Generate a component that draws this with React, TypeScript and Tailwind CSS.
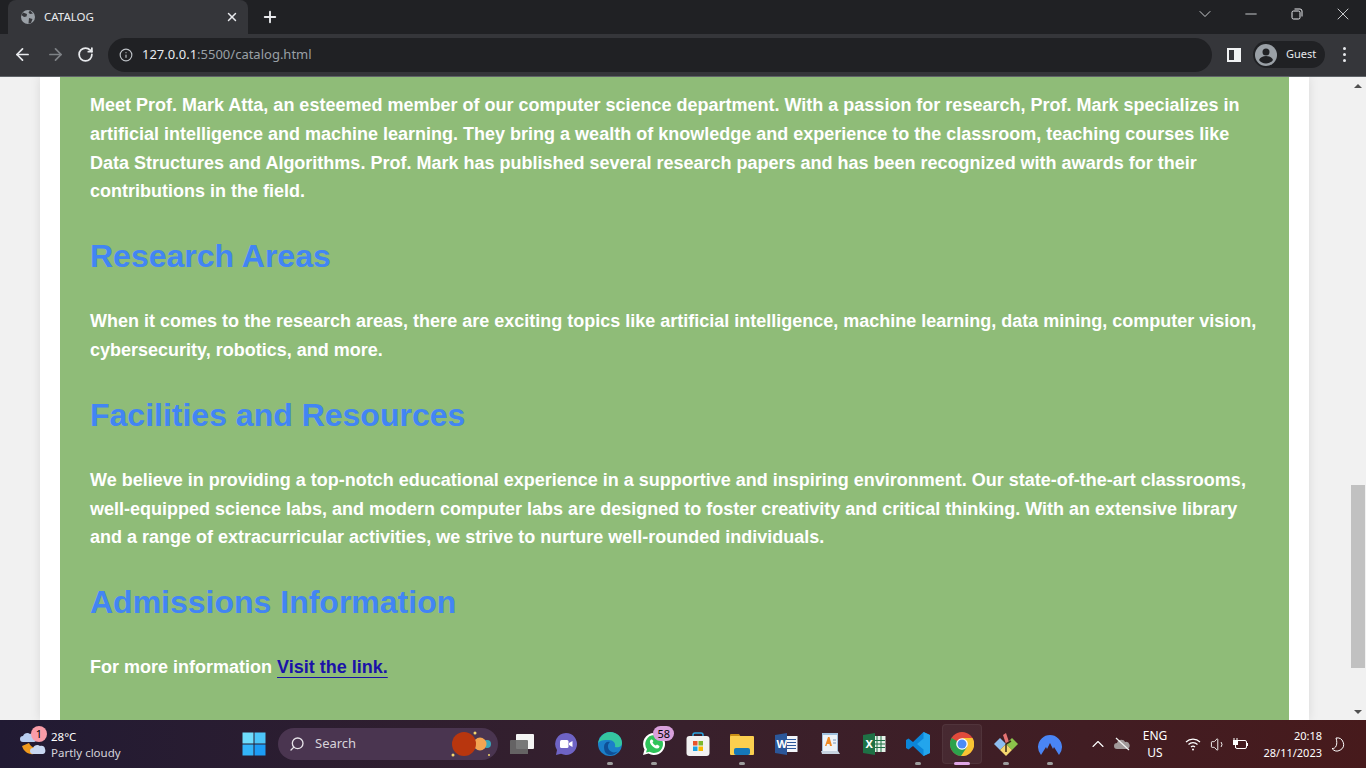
import React from "react";
import { ArrowLeft, ArrowRight, RotateCw, Info, X, Plus, ChevronDown, ChevronUp, Minus, Search, Volume1 } from "lucide-react";

const uiFont = "font-['Noto_Sans',sans-serif]";

const TabStrip = () => (
  <div className={`flex h-[34px] bg-[#202124] text-[#e8eaed] ${uiFont}`}>
    <div className="ml-2 flex w-[240px] items-center rounded-t-lg bg-[#35363a] pl-3 pr-2">
      <svg width="16" height="16" viewBox="0 0 16 16" className="shrink-0">
        <circle cx="8" cy="8" r="7" fill="#9aa0a6" />
        <path d="M3 3.500 7 5l-.5 2.500L4 8 1.500 6ZM9 9l3.500 1-1.500 4-2.500.5ZM10 1.500l3 3-3 .5-1.500-1.500Z" fill="#35363a" />
      </svg>
      <span className="ml-2 flex-1 text-[11.500px] leading-none">CATALOG</span>
      <X size={14} strokeWidth={2.5} className="mr-[1px]" />
    </div>
    <div className="ml-[13px] flex items-center">
      <Plus size={18} strokeWidth={2.5} />
    </div>
    <div className="ml-auto flex h-[28px] items-center">
      <div className="flex w-[46px] justify-center"><ChevronDown size={20} strokeWidth={1} /></div>
      <div className="flex w-[46px] justify-center"><Minus size={18} strokeWidth={1.1} /></div>
      <div className="flex w-[46px] justify-center">
        <svg width="12" height="12" viewBox="0 0 12 12" fill="none" stroke="#e8eaed">
          <rect x="1" y="3" width="8" height="8" rx="1.500" />
          <path d="M3.500 1h5.500a2 2 0 0 1 2 2v5.500" />
        </svg>
      </div>
      <div className="flex w-[46px] justify-center"><X size={20} strokeWidth={1} /></div>
    </div>
  </div>
);

const Toolbar = () => (
  <div className={`flex h-[43px] items-center border-b border-[#5f6368] bg-[#35363a] pb-[1px] pr-[20px] ${uiFont}`}>
    <ArrowLeft size={19} strokeWidth={2.2} color="#e8eaed" className="ml-[13px]" />
    <ArrowRight size={19} strokeWidth={2.2} color="#7e8286" className="ml-[14px]" />
    <RotateCw size={17} strokeWidth={2.5} color="#e8eaed" className="ml-[12px]" />
    <div className="ml-[14px] flex h-[34px] flex-1 items-center rounded-full bg-[#202124] pl-[11px]">
      <Info size={14} color="#bdc1c6" />
      <span className="ml-[9px] text-[13px] text-[#9aa0a6]">
        <span className="text-[#e8eaed]">127.0.0.1</span>:5500/catalog.html
      </span>
    </div>
    <div className="ml-[15px] flex h-[14px] w-[14px] items-center border-[2px] border-r-[7px] border-[#f1f3f4]" />
    <div className="ml-[12px] flex h-[27px] w-[72px] items-center rounded-full bg-[#202124] pl-[2px]">
      <svg width="22" height="22" viewBox="0 0 22 22">
        <circle cx="11" cy="11" r="11" fill="#9aa0a6" />
        <circle cx="11" cy="8" r="3.500" fill="#202124" />
        <path d="M4 16c1.500-3 4-4 7-4s5.500 1 7 4c-1.500 2-4 3.500-7 3.500S5.500 18 4 16Z" fill="#202124" />
      </svg>
      <span className="ml-[9px] text-[11px] text-[#e8eaed]">Guest</span>
    </div>
    <div className="ml-[18px] flex flex-col gap-[3px]">
      <span className="h-[3px] w-[3px] rounded-full bg-[#e8eaed]" />
      <span className="h-[3px] w-[3px] rounded-full bg-[#e8eaed]" />
      <span className="h-[3px] w-[3px] rounded-full bg-[#e8eaed]" />
    </div>
  </div>
);

const Heading = ({ children }: { children: React.ReactNode }) => (
  <h2 className="mt-[24.900px] text-[32px] font-bold leading-[51.200px] text-[#4285f4]">{children}</h2>
);

const Para = ({ children }: { children: React.ReactNode }) => (
  <p className="mt-[24.900px] text-[18px] font-bold leading-[28.800px] text-white">{children}</p>
);

const Page = () => (
  <div className="flex min-h-0 flex-1 overflow-hidden bg-[#f1f1f1] font-['Liberation_Sans',Arial,sans-serif]">
    <div className="flex-1 overflow-hidden pl-[40px] pr-[41px]">
      <div className="h-full bg-white px-5 shadow-[0_0_10px_rgba(0,0,0,0.1)]">
        <div className="h-full overflow-hidden bg-[#8fbc78] px-[30px] pt-[14px]">
          <p className="text-[18px] font-bold leading-[28.800px] text-white">
            Meet Prof. Mark Atta, an esteemed member of our computer science department. With a passion for research, Prof. Mark specializes in artificial intelligence and machine learning. They bring a wealth of knowledge and experience to the classroom, teaching courses like Data Structures and Algorithms. Prof. Mark has published several research papers and has been recognized with awards for their contributions in the field.
          </p>
          <Heading>Research Areas</Heading>
          <Para>
            When it comes to the research areas, there are exciting topics like artificial intelligence, machine learning, data mining, computer vision, cybersecurity, robotics, and more.
          </Para>
          <Heading>Facilities and Resources</Heading>
          <Para>
            We believe in providing a top-notch educational experience in a supportive and inspiring environment. Our state-of-the-art classrooms, well-equipped science labs, and modern computer labs are designed to foster creativity and critical thinking. With an extensive library and a range of extracurricular activities, we strive to nurture well-rounded individuals.
          </Para>
          <Heading>Admissions Information</Heading>
          <Para>
            For more information{" "}
            <a href="#" className="text-[#1a12a8] underline decoration-1 underline-offset-[4px]">Visit the link.</a>
          </Para>
        </div>
      </div>
    </div>
    <div className="flex w-4 flex-col items-center bg-[#f1f1f1]">
      <div className="mt-[7px] h-0 w-0 border-x-[4px] border-b-[4px] border-x-transparent border-b-[#505050]" />
      <div className="mt-[397px] h-[183px] w-[14px] bg-[#c1c1c1]" />
      <div className="mt-[42px] h-0 w-0 border-x-[4px] border-t-[4px] border-x-transparent border-t-[#505050]" />
    </div>
  </div>
);

const Tile = ({ children, dot, active }: { children: React.ReactNode; dot?: boolean; active?: boolean }) => (
  <div className="relative flex h-[48px] w-[44px] items-center justify-center">
    {active && <div className="absolute left-[2px] top-[4px] h-[40px] w-[40px] rounded border border-white/5 bg-white/5" />}
    <div className="relative flex">{children}</div>
    {dot && <div className="absolute bottom-[3px] left-[19px] h-[3px] w-[6px] rounded-full bg-[#9d9d9d]" />}
    {active && <div className="absolute bottom-[3px] left-[14px] h-[3px] w-[16px] rounded-full bg-[#e0a6e6]" />}
  </div>
);

const Count = ({ children }: { children: React.ReactNode }) => (
  <span className="absolute -right-[8px] -top-[6px] rounded-full bg-[#d9a0dc] px-[4px] text-[11px] leading-[15px] text-black">{children}</span>
);

const Taskbar = () => (
  <div className={`flex h-[48px] shrink-0 items-center bg-gradient-to-r from-[#211a33] via-[#38202c] to-[#471a1c] text-white ${uiFont}`}>
    {/* weather */}
    <div className="relative ml-[20px] flex w-[212px] items-center">
      <svg width="26" height="26" viewBox="0 0 26 26">
        <path d="M2 15c2 7 9 10 15 7 3-1 4-3 5-5-6 2-11-1-13-5Z" fill="#f09a1d" />
        <path d="M3 11a3 3 0 0 1 0-6c1-3 5-4 7-2 3-1 5 1 5 3 2 0 2 5-1 5Z" fill="#b8cdf0" />
        <path d="M13 23a3 3 0 0 1 0-6c1-3 5-4 7-2 3-1 5 1 5 3 1 2 0 5-2 5Z" fill="#c9d8f2" />
      </svg>
      <span className="absolute left-[11px] top-[-1px] h-4 w-4 rounded-full bg-[#f99ca8] text-center text-[11px] leading-4 text-black">1</span>
      <div className="ml-[5px] mt-[2px] text-[11.500px] leading-[16px]">
        <div>28°C</div>
        <div className="text-[#d6d3da]">Partly cloudy</div>
      </div>
    </div>
    {/* start */}
    <Tile>
      <svg width="24" height="24" viewBox="0 0 24 24">
        <rect x="0.500" y="0.500" width="11" height="11" fill="#6fdcfb" />
        <rect x="12.500" y="0.500" width="11" height="11" fill="#4cc5f8" />
        <rect x="0.500" y="12.500" width="11" height="11" fill="#33b4f8" />
        <rect x="12.500" y="12.500" width="11" height="11" fill="#1c9cf5" />
      </svg>
    </Tile>
    {/* search */}
    <div className="relative ml-[2px] flex h-[32px] w-[220px] items-center rounded-full bg-[#4a3550] pl-[11px]">
      <Search size={16} color="#e6e2e8" className="-scale-x-100" />
      <span className="ml-[10px] text-[13px] text-[#d8d4da]">Search</span>
      <svg width="48" height="28" viewBox="0 0 48 28" className="absolute right-[2px] top-[2px]">
        <circle cx="39" cy="14" r="4" fill="#3aa6b8" />
        <circle cx="32" cy="14" r="6.500" fill="#f2a552" />
        <circle cx="16" cy="14" r="12" fill="#b8360e" />
        <circle cx="5" cy="25" r="1.500" fill="#f5d76e" />
        <circle cx="27" cy="3" r="1.500" fill="#f5d76e" />
        <circle cx="41" cy="25" r="1" fill="#f5d76e" />
      </svg>
    </div>
    <div className="ml-[2px] flex">
      <Tile>
        <svg width="24" height="20" viewBox="0 0 24 20">
          <rect x="6" y="0" width="18" height="15" rx="1" fill="#f4f4f4" />
          <rect x="0" y="6" width="18" height="15" rx="1" fill="#6a6a6a" fillOpacity="0.9" />
        </svg>
      </Tile>
      <Tile>
        <svg width="24" height="24" viewBox="0 0 24 24">
          <path d="M12 1a11 11 0 1 1-5 20.800L2 23l1-5A11 11 0 0 1 12 1Z" fill="#6e63c4" />
          <rect x="6" y="8" width="8.500" height="8" rx="1.500" fill="#fff" />
          <path d="m15 11 3.500-2v6L15 13Z" fill="#fff" />
        </svg>
      </Tile>
      <Tile dot>
        <svg width="24" height="24" viewBox="0 0 24 24">
          <circle cx="12" cy="12" r="12" fill="#1b7fc9" />
          <path d="M0 12C1 4 7 0 12 0c7 0 12 5 12 11 0 4-4 5-7 4 1-4-2-7-6-7-5 0-10 0-11 4Z" fill="#35c6a0" />
          <path d="M6 15c0-4 3-6 6-5-3 2-3 8 2 10 2 1 5 0 6-1-3 4-8 5-11 3-2-1-3-4-3-7Z" fill="#0f4f96" />
        </svg>
      </Tile>
      <Tile dot>
        <svg width="24" height="24" viewBox="0 0 24 24">
          <path d="M12 1a11 11 0 1 1-5.500 20.500L1 23l1.500-5.500A11 11 0 0 1 12 1Z" fill="#fff" />
          <path d="M12 3a9 9 0 1 1-4.500 16.800L4 20.500l1-3.300A9 9 0 0 1 12 3Z" fill="#2fc45a" />
          <path d="M9 7.500c-1.500 1-1.500 3 0 5s4 4 6 4 2.500-1.500 2.500-2.500l-2.500-1.500-1.200 1c-1.500-.5-2.800-2-3.300-3.300l1-1.200L10 7.500Z" fill="#fff" />
        </svg>
        <Count>58</Count>
      </Tile>
      <Tile>
        <svg width="24" height="24" viewBox="0 0 24 24">
          <path d="M7 5V3a2 2 0 0 1 2-2h6a2 2 0 0 1 2 2v2" fill="none" stroke="#2aa5df" strokeWidth="1.500" />
          <rect x="0.500" y="4" width="23" height="20" rx="3" fill="#f2f2f2" />
          <rect x="7" y="9" width="4.500" height="4.500" fill="#e8552c" />
          <rect x="12.500" y="9" width="4.500" height="4.500" fill="#7cb82f" />
          <rect x="7" y="14.500" width="4.500" height="4.500" fill="#1ba1e2" />
          <rect x="12.500" y="14.500" width="4.500" height="4.500" fill="#f9b800" />
        </svg>
      </Tile>
      <Tile dot>
        <svg width="24" height="22" viewBox="0 0 24 22">
          <path d="M0 2a1 1 0 0 1 1-1h8l2 3H0Z" fill="#c98f16" />
          <rect x="0" y="3" width="24" height="19" rx="1" fill="#fbcf4f" />
          <rect x="4" y="15" width="16" height="7" rx="2" fill="#1578b8" />
        </svg>
      </Tile>
      <Tile>
        <svg width="23" height="22" viewBox="0 0 23 22">
          <rect x="9" y="3" width="13.500" height="16" fill="#f2f5fa" />
          <path d="M12 6.500h9M12 9.500h9M12 12.500h9M12 15.500h9" stroke="#2b579a" />
          <path d="M0 2l12-2v22L0 20Z" fill="#2b579a" />
        </svg>
        <span className="absolute left-[2px] top-[4px] text-[11px] font-bold leading-[14px] text-white">W</span>
      </Tile>
      <Tile>
        <svg width="20" height="22" viewBox="0 0 20 22">
          <path d="M2 0h16v19H2Z" fill="#9fc0de" />
          <path d="M3 2h14v16H3Z" fill="#eef3f8" />
          <path d="M5 13 8 4h1.500L12 13h-2l-.5-2H7l-.5 2Z" fill="#f08a24" />
          <path d="M13 7h3M13 10h3" stroke="#7a98bc" />
          <path d="M1 18h17l2 3H2Z" fill="#c7d3e0" />
        </svg>
      </Tile>
      <Tile>
        <svg width="23" height="22" viewBox="0 0 23 22">
          <rect x="9" y="3" width="13.500" height="16" fill="#e6f2ea" />
          <path d="M14 3v16M18 3v16M10 7.500h12M10 11h12M10 14.500h12" stroke="#1e7145" />
          <path d="M0 2l12-2v22L0 20Z" fill="#1e7145" />
        </svg>
        <span className="absolute left-[3px] top-[4px] text-[11px] font-bold leading-[14px] text-white">X</span>
      </Tile>
      <Tile dot>
        <svg width="24" height="24" viewBox="0 0 24 24">
          <path d="M17.500 0 24 3v18l-6.500 3L7 14l-4.500 3.500L0 16V8l2.500-1.500L7 10Z" fill="#0b85d8" />
          <path d="M17.500 0 24 3v18l-6.500 3Zm0 6.500L11 12l6.500 5.500Z" fill="#23a5ec" fillRule="evenodd" />
        </svg>
      </Tile>
      <Tile active>
        <svg width="24" height="24" viewBox="0 0 24 24">
          <circle cx="12" cy="12" r="12" fill="#e04a3c" />
          <path d="M12 12 1.600 6A12 12 0 0 0 12 24l5-8Z" fill="#2da24c" />
          <path d="M12 6h10.500A12 12 0 0 1 11 24l6-9Z" fill="#f9c433" />
          <circle cx="12" cy="12" r="5.800" fill="#fff" />
          <circle cx="12" cy="12" r="4.500" fill="#4c8bf5" />
        </svg>
      </Tile>
      <Tile dot>
        <svg width="24" height="24" viewBox="0 0 24 24">
          <path d="M12 12 6 6 0 12l6 6Z" fill="#8dbdf0" />
          <path d="M12 12l6-6 6 6-6 6Z" fill="#8bc34a" />
          <path d="M6 18l6-6 6 6-6 6Z" fill="#f5d76e" />
          <path d="m9 3 3 9 3-2-3-9Z" fill="#e57373" />
          <path d="M12 12v8" stroke="#3a2a1a" strokeWidth="1.500" />
          <path d="m12 12 5-3" stroke="#3a2a1a" strokeWidth="1.500" />
        </svg>
      </Tile>
      <Tile dot>
        <svg width="24" height="22" viewBox="0 0 24 22">
          <path d="M3 22A12 12 0 1 1 21 22l-5-8-1 2-3-6-3 6-1-2Z" fill="#4a85f5" />
        </svg>
      </Tile>
    </div>
    {/* tray */}
    <div className="ml-[16px] flex items-center">
      <ChevronUp size={20} strokeWidth={1.3} />
      <svg width="16" height="14" viewBox="0 0 16 14" className="ml-[6px]">
        <path d="M3 12a3 3 0 0 1 0-6c1-4 7-4 8-1a3.500 3.500 0 0 1 2 7Z" fill="#a19a9a" />
        <path d="M2 1l13 12" stroke="#f2f2f2" strokeWidth="1.200" />
      </svg>
      <div className="ml-[6px] w-[38px] text-center text-xs leading-[17px]">
        <div>ENG</div>
        <div>US</div>
      </div>
      <svg width="16" height="14" viewBox="0 0 16 14" fill="none" stroke="#fff" strokeWidth="1.200" className="ml-[11px]">
        <path d="M1 5a10 10 0 0 1 14 0M3.500 7.500a6.500 6.500 0 0 1 9 0M6 10a3 3 0 0 1 4 0" />
        <circle cx="8" cy="12.500" r="1" fill="#fff" stroke="none" />
      </svg>
      <Volume1 size={17} strokeWidth={1.3} className="ml-[9px]" />
      <svg width="16" height="14" viewBox="0 0 16 14" fill="none" stroke="#fff" className="ml-[5px]">
        <rect x="3.500" y="3.500" width="11" height="8" rx="1.500" />
        <path d="M15.500 6v3" />
        <rect x="1" y="3" width="5" height="5" fill="#fff" stroke="none" />
        <path d="M2 1v2M5 1v2M3.500 8v3" />
      </svg>
      <div className="ml-[9px] w-[65px] text-right text-[11px] leading-[17px]">
        <div>20:18</div>
        <div className="whitespace-nowrap">28/11/2023</div>
      </div>
      <svg width="14" height="15" viewBox="0 0 14 15" fill="none" stroke="#fff" className="ml-[9px]">
        <path d="M5 1a6.500 6.500 0 1 1-4 10.500c4 .5 6-4.500 4-10.500Z" />
      </svg>
    </div>
  </div>
);

export default function App() {
  return (
    <div className="flex h-[768px] w-[1366px] flex-col overflow-hidden">
      <TabStrip />
      <Toolbar />
      <Page />
      <Taskbar />
    </div>
  );
}
